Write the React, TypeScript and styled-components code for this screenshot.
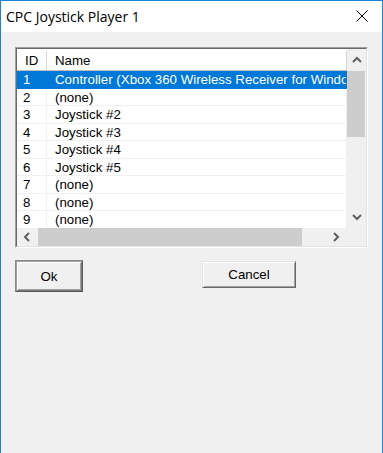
import React from 'react';
import styled, { createGlobalStyle } from 'styled-components';

const GlobalStyle = createGlobalStyle`
  html, body {
    margin: 0;
    padding: 0;
    background: #f0f0f0;
    overflow: hidden;
  }
  * {
    box-sizing: border-box;
  }
`;

const Window = styled.div`
  width: 383px;
  height: 453px;
  border: 1px solid #1883d7;
  border-bottom: none;
  background: #f0f0f0;
  display: flex;
  flex-direction: column;
`;

const TitleBar = styled.div`
  height: 31px;
  flex: none;
  background: #fff;
  display: flex;
  align-items: center;
  justify-content: space-between;
  padding: 0 14px 1px 5px;
  font-family: "Segoe UI", "Open Sans", "Noto Sans", sans-serif;
  font-size: 14px;
  color: #000;
`;

const Body = styled.div`
  flex: 1;
  display: flex;
  flex-direction: column;
  padding: 15px 14px 0 14px;
  font-family: "Liberation Sans", Arial, sans-serif;
  font-size: 13.3px;
  color: #000;
`;

const Frame = styled.div`
  width: 353px;
  height: 201px;
  border: 1px solid;
  border-color: #a0a0a0 #fff #fff #a0a0a0;
`;

const Inner = styled.div`
  width: 100%;
  height: 100%;
  border: 1px solid;
  border-color: #696969 #e3e3e3 #e3e3e3 #696969;
  display: grid;
  grid-template-columns: 330px 19px;
  grid-template-rows: 179px 18px;
  background: #fff;
`;

const ListArea = styled.div`
  overflow: hidden;
  background: #fff;
`;

const HeaderRow = styled.div`
  display: flex;
  height: 22px;
  padding-top: 2px;
  border-bottom: 1px solid #bdbdbd;
  background: #fff;
`;

const HeaderCell = styled.div<{ $w?: number }>`
  ${(p) => (p.$w ? `width: ${p.$w}px; flex: none;` : 'flex: 1;')}
  padding-left: 8px;
  display: flex;
  align-items: center;
  border-right: 1px solid #d5d5d5;
`;

const Row = styled.div<{ $selected?: boolean }>`
  display: flex;
  height: 17.5px;
  padding-top: 1px;
  white-space: nowrap;
  background: ${(p) => (p.$selected ? '#0078d7' : '#fff')};
  color: ${(p) => (p.$selected ? '#fff' : '#000')};
  border-bottom: 1px solid ${(p) => (p.$selected ? '#0078d7' : '#f0f0f0')};
`;

const Cell = styled.div<{ $w?: number; $pad: number; $selected?: boolean }>`
  ${(p) => (p.$w ? `width: ${p.$w}px; flex: none;` : 'flex: 1;')}
  padding-left: ${(p) => p.$pad}px;
  display: flex;
  align-items: center;
  overflow: hidden;
  border-right: 1px solid ${(p) => (p.$selected ? '#0078d7' : '#f0f0f0')};
`;

const VScroll = styled.div`
  background: #f0f0f0;
  display: flex;
  flex-direction: column;
`;

const HScroll = styled.div`
  background: #f0f0f0;
  display: flex;
`;

const Corner = styled.div`
  background: #f0f0f0;
`;

const ArrowBtn = styled.div<{ $len: number; $horizontal?: boolean }>`
  flex: none;
  ${(p) => (p.$horizontal ? `width: ${p.$len}px;` : `height: ${p.$len}px;`)}
  display: flex;
  align-items: center;
  justify-content: center;
`;

const Track = styled.div<{ $horizontal?: boolean }>`
  flex: 1;
  display: flex;
  flex-direction: ${(p) => (p.$horizontal ? 'row' : 'column')};
  padding: ${(p) => (p.$horizontal ? '0 0 0 1px' : '0 1px 0 0')};
`;

const Thumb = styled.div<{ $len: number; $horizontal?: boolean }>`
  flex: none;
  background: #cdcdcd;
  ${(p) => (p.$horizontal ? `width: ${p.$len}px; height: 100%;` : `height: ${p.$len}px; width: 100%;`)}
`;

const ButtonRow = styled.div`
  display: flex;
  align-items: flex-start;
  gap: 119px;
  margin-top: 12px;
`;

const DlgButton = styled.button<{ $default?: boolean }>`
  font-family: "Liberation Sans", Arial, sans-serif;
  font-size: 13.3px;
  color: #000;
  background: #f0f0f0;
  padding: 0;
  width: ${(p) => (p.$default ? 68 : 94)}px;
  height: ${(p) => (p.$default ? 32 : 27)}px;
  margin-top: ${(p) => (p.$default ? 0 : 1)}px;
  border: 1px solid;
  border-color: ${(p) =>
    p.$default ? '#8a8a8a #5a5a5a #5a5a5a #8a8a8a' : '#e3e3e3 #696969 #696969 #e3e3e3'};
  box-shadow: ${(p) =>
    p.$default
      ? 'inset 1px 1px 0 #a0a0a0, inset -1px -1px 0 #7a7a7a, inset 2px 2px 0 #fff, inset -2px -2px 0 #a0a0a0'
      : 'inset 1px 1px 0 #fff, inset -1px -1px 0 #a0a0a0'};
`;

const Chevron: React.FC<{ dir: 'up' | 'down' | 'left' | 'right' }> = ({ dir }) => {
  const pts = {
    up: '1,6 5,2 9,6',
    down: '1,2 5,6 9,2',
    left: '6,1 2,5 6,9',
    right: '2,1 6,5 2,9',
  }[dir];
  const horiz = dir === 'left' || dir === 'right';
  return (
    <svg width={horiz ? 8 : 10} height={horiz ? 10 : 8} viewBox={horiz ? '0 0 8 10' : '0 0 10 8'}>
      <polyline points={pts} fill="none" stroke="#606060" strokeWidth="2" />
    </svg>
  );
};

const rows = [
  { id: '1', name: 'Controller (Xbox 360 Wireless Receiver for Windows)' },
  { id: '2', name: '(none)' },
  { id: '3', name: 'Joystick #2' },
  { id: '4', name: 'Joystick #3' },
  { id: '5', name: 'Joystick #4' },
  { id: '6', name: 'Joystick #5' },
  { id: '7', name: '(none)' },
  { id: '8', name: '(none)' },
  { id: '9', name: '(none)' },
];

const App: React.FC = () => {
  return (
    <>
      <GlobalStyle />
      <Window>
        <TitleBar>
          <span>CPC Joystick Player 1</span>
          <svg width="12" height="12" viewBox="0 0 12 12">
            <path d="M0.5 0.5 L11.5 11.5 M11.5 0.5 L0.5 11.5" stroke="#000" strokeWidth="1" />
          </svg>
        </TitleBar>
        <Body>
          <Frame>
            <Inner>
              <ListArea>
                <HeaderRow>
                  <HeaderCell $w={30}>ID</HeaderCell>
                  <HeaderCell>Name</HeaderCell>
                </HeaderRow>
                {rows.map((r, i) => (
                  <Row key={r.id} $selected={i === 0}>
                    <Cell $w={30} $pad={6} $selected={i === 0}>{r.id}</Cell>
                    <Cell $pad={8} $selected={i === 0}>{r.name}</Cell>
                  </Row>
                ))}
              </ListArea>
              <VScroll>
                <ArrowBtn $len={22}><Chevron dir="up" /></ArrowBtn>
                <Track>
                  <Thumb $len={66} />
                </Track>
                <ArrowBtn $len={22}><Chevron dir="down" /></ArrowBtn>
              </VScroll>
              <HScroll>
                <ArrowBtn $len={20} $horizontal><Chevron dir="left" /></ArrowBtn>
                <Track $horizontal>
                  <Thumb $len={264} $horizontal />
                </Track>
                <ArrowBtn $len={22} $horizontal><Chevron dir="right" /></ArrowBtn>
              </HScroll>
              <Corner />
            </Inner>
          </Frame>
          <ButtonRow>
            <DlgButton $default>Ok</DlgButton>
            <DlgButton>Cancel</DlgButton>
          </ButtonRow>
        </Body>
      </Window>
    </>
  );
};

export default App;
